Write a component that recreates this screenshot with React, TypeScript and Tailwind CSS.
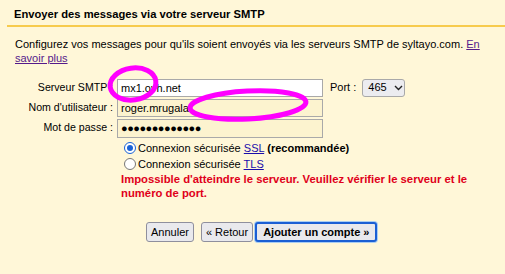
import React from "react";

const Radio: React.FC<{ checked?: boolean }> = ({ checked }) =>
    checked ? (
        <span className="w-[12px] h-[12px] rounded-full border-[1.5px] border-[#1a62d6] flex items-center justify-center bg-white shrink-0">
            <span className="w-[6px] h-[6px] rounded-full bg-[#1a62d6]" />
        </span>
    ) : (
        <span className="w-[12px] h-[12px] rounded-full border border-[#777] bg-white shrink-0" />
    );

export default function App() {
    const font = { fontFamily: "Arial, 'Liberation Sans', sans-serif" };
    return (
        <div className="relative w-[505px] h-[274px] bg-[#fff7d8] text-[11px] text-black overflow-hidden" style={font}>
            <div className="ml-[7px] pl-[7px] pt-[7px] h-[27px] border-b-2 border-[#f7cb4d]">
                <h1 className="font-bold text-[11.2px] leading-[14px]">Envoyer des messages via votre serveur SMTP</h1>
            </div>
            <p className="pl-[15px] pr-[18px] pt-[10px] leading-[14px]">
                Configurez vos messages pour qu'ils soient envoyés via les serveurs SMTP de syltayo.com.{" "}
                <a className="text-[#551a8b] underline">En savoir plus</a>
            </p>

            <div className="mt-[13px] flex flex-col gap-[1px]">
                <div className="flex items-center h-[19px]">
                    <span className="w-[117px] text-right pr-[4px] text-[10.6px]">Serveur SMTP :</span>
                    <div className="w-[206px] h-[18px] border border-[#a9a9a9] bg-white pl-[3px] leading-[16px]">mx1.ovh.net</div>
                    <span className="ml-[7px]">Port :</span>
                    <div className="ml-[6px] w-[43px] h-[18px] border border-[#a9a9a9] rounded-[3px] bg-[#ececf0] flex items-center pl-[5px] gap-[7px]">
                        <span className="leading-none">465</span>
                        <svg width="9" height="6" viewBox="0 0 9 6"><path d="M1 1l3.5 3.5L8 1" fill="none" stroke="#222" strokeWidth="1.4" /></svg>
                    </div>
                </div>
                <div className="flex items-center h-[19px]">
                    <span className="w-[117px] text-right pr-[4px] text-[10.6px]">Nom d'utilisateur :</span>
                    <div className="w-[206px] h-[18px] border border-[#a9a9a9] bg-[#fcf3cf] pl-[3px] leading-[16px]">roger.mrugala</div>
                </div>
                <div className="flex items-center h-[20px]">
                    <span className="w-[117px] text-right pr-[4px] text-[10.6px]">Mot de passe :</span>
                    <div className="w-[206px] h-[19px] border border-[#a9a9a9] bg-[#fcf3cf] pl-[3px] leading-[17px] tracking-[-0.5px] text-[11px]">●●●●●●●●●●●●●</div>
                </div>
            </div>

            <div className="pl-[124px] mt-[2px] flex flex-col">
                <label className="flex items-center gap-[2px] h-[16px]">
                    <Radio checked />
                    <span>
                        Connexion sécurisée <a className="text-[#1a0dab] underline">SSL</a> <b>(recommandée)</b>
                    </span>
                </label>
                <label className="flex items-center gap-[2px] h-[16px]">
                    <Radio />
                    <span>
                        Connexion sécurisée <a className="text-[#1a0dab] underline">TLS</a>
                    </span>
                </label>
            </div>
            <p className="pl-[121px] pr-[30px] text-[11.3px] text-[#e0001a] font-bold leading-[14px]">
                Impossible d'atteindre le serveur. Veuillez vérifier le serveur et le numéro de port.
            </p>

            <div className="mt-[22px] pl-[146px] flex items-center">
                <button className="h-[20px] px-[4px] border border-[#8f8f9d] rounded-[3px] bg-[#e9e9ed] leading-none">Annuler</button>
                <button className="ml-[7px] h-[20px] px-[4px] border border-[#8f8f9d] rounded-[3px] bg-[#e9e9ed] leading-none">« Retour</button>
                <button className="ml-[2px] h-[20px] px-[6px] border-2 border-[#1b5fd4] rounded-[3px] bg-[#e9e9ed] font-bold leading-none ring-1 ring-[#a9cdf2]">Ajouter un compte »</button>
            </div>

            <svg className="absolute inset-0 pointer-events-none" width="505" height="274">
                <ellipse cx="133" cy="84" rx="23" ry="16" fill="none" stroke="#ff00ff" strokeWidth="5" transform="rotate(-8 133 84)" />
                <ellipse cx="248" cy="105" rx="58" ry="14" fill="none" stroke="#ff00ff" strokeWidth="5" transform="rotate(-3 248 105)" />
            </svg>
        </div>
    );
}
